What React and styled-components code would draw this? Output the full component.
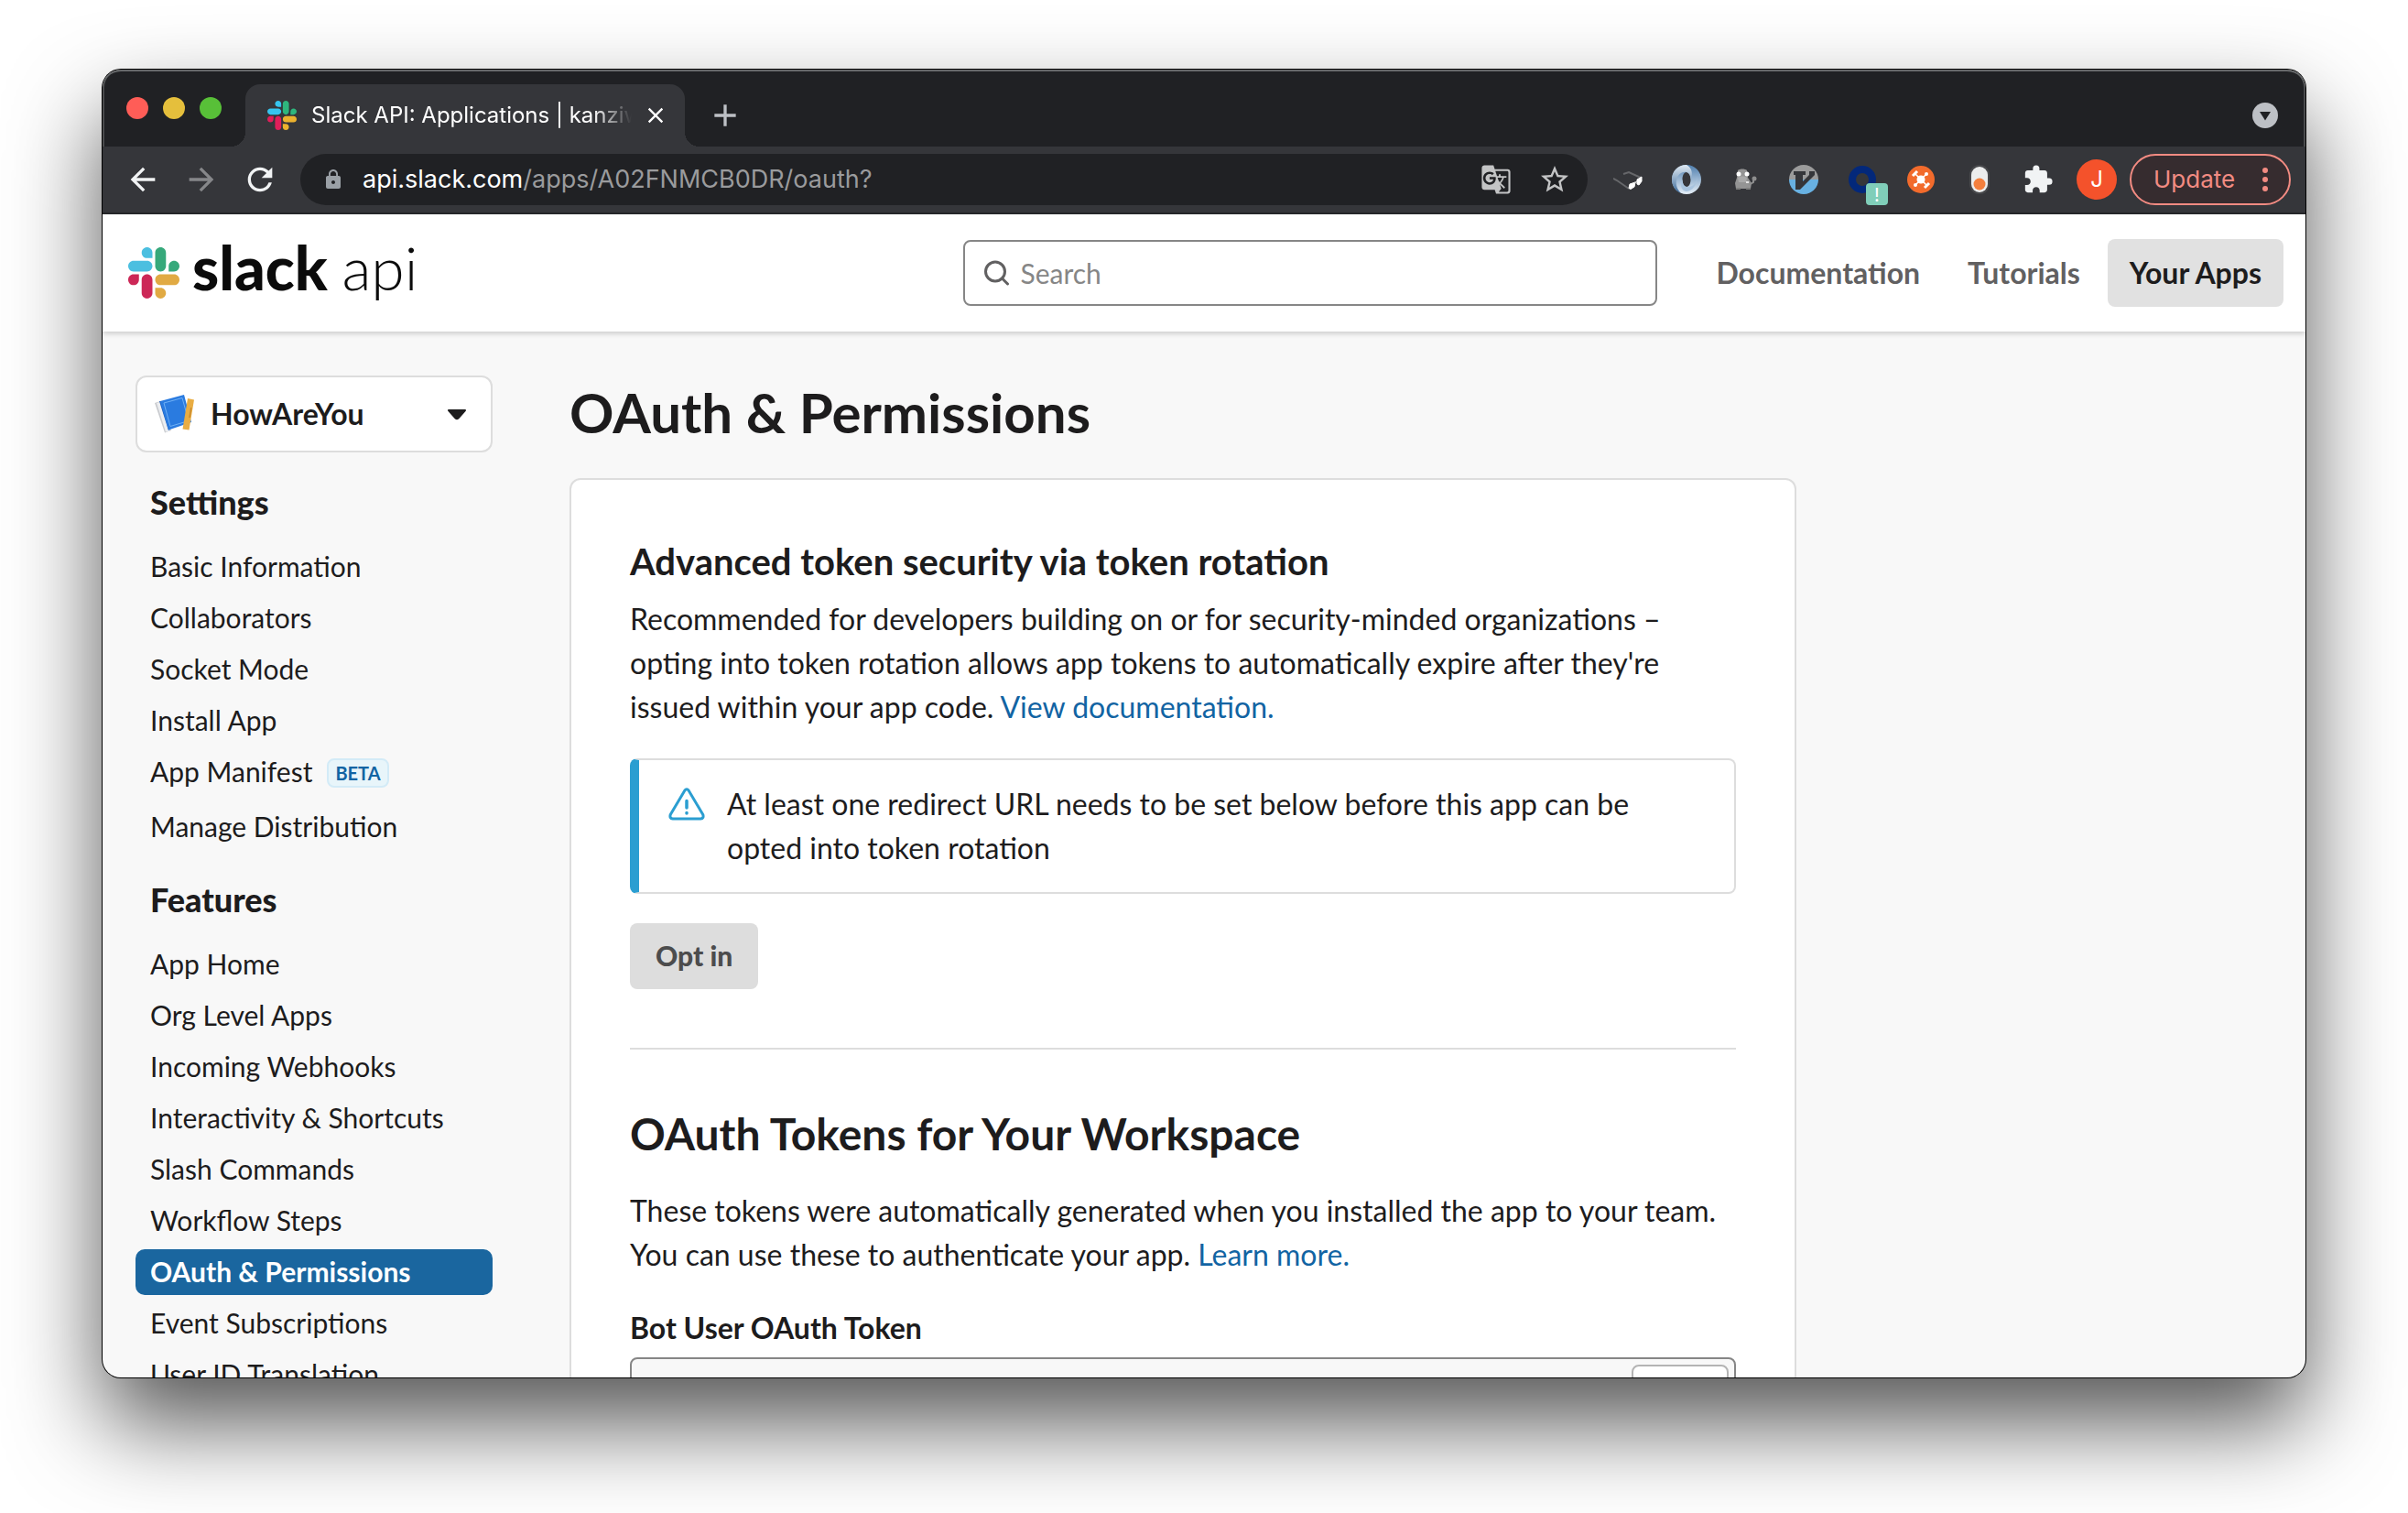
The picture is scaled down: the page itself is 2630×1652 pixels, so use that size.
import React from "react";
import styled, { createGlobalStyle, css } from "styled-components";
import {
  MdAdd,
  MdArrowBack,
  MdArrowForward,
  MdClose,
  MdExtension,
  MdGTranslate,
  MdLock,
  MdRefresh,
  MdStarBorder,
} from "react-icons/md";

const GlobalStyle = createGlobalStyle`
  *, *::before, *::after { box-sizing: border-box; }
  body {
    margin: 0;
    background: #fff;
    color: #1d1c1d;
    font-family: Lato, "Open Sans", sans-serif;
    -webkit-font-smoothing: antialiased;
  }
  button, input, select { font: inherit; color: inherit; }
  h1, h2, h3, p, ul { margin: 0; padding: 0; }
`;

const chromeFont = css`
  font-family: Inter, Roboto, sans-serif;
`;

const Desktop = styled.div`
  display: flex;
  height: 100vh;
  padding: 76px 112px 148px;
  overflow: hidden;
`;

const Window = styled.div`
  flex: 1;
  min-width: 0;
  display: flex;
  flex-direction: column;
  overflow: hidden;
  border-radius: 20px;
  background: #f8f8f8;
  box-shadow: 0 0 0 1px #000, 0 50px 100px rgba(0, 0, 0, 0.67);
`;

/* ---------- browser chrome ---------- */

const TabStrip = styled.div`
  ${chromeFont}
  display: flex;
  align-items: flex-end;
  flex: none;
  height: 84px;
  padding: 0 30px 0 26px;
  background: #202124;
  border-radius: 20px 20px 0 0;
  box-shadow: inset 0 2px 0 #66686a, inset 2px 0 0 #4a4b4d, inset -2px 0 0 #4a4b4d;
`;

const Lights = styled.div`
  display: flex;
  align-items: center;
  align-self: stretch;
  gap: 16px;
  margin-right: 26px;
`;

const Light = styled.button`
  width: 24px;
  height: 24px;
  padding: 0;
  border: 0;
  border-radius: 50%;
  background: ${(p) => p.$color};
`;

const Tab = styled.div`
  position: relative;
  display: flex;
  align-items: center;
  width: 480px;
  height: 68px;
  padding: 0 18px 0 24px;
  border-radius: 16px 16px 0 0;
  background: #35363a;
  color: #fff;

  &::before,
  &::after {
    content: "";
    position: absolute;
    bottom: 0;
    width: 16px;
    height: 16px;
  }
  &::before {
    right: 100%;
    background: radial-gradient(circle at 0 0, transparent 16px, #35363a 16px);
  }
  &::after {
    left: 100%;
    background: radial-gradient(circle at 100% 0, transparent 16px, #35363a 16px);
  }
`;

const TabTitle = styled.span`
  flex: 1;
  min-width: 0;
  margin: 0 12px 0 16px;
  overflow: hidden;
  white-space: nowrap;
  font-size: 24px;
  line-height: 32px;
  mask-image: linear-gradient(to right, #000 88%, transparent);
`;

const BareButton = styled.button`
  display: flex;
  align-items: center;
  justify-content: center;
  flex: none;
  width: ${(p) => p.$width}px;
  height: ${(p) => p.$height || 56}px;
  padding: 0;
  border: 0;
  background: none;
  color: ${(p) => p.$color || "#f1f3f4"};
`;

const NewTab = styled(BareButton)`
  margin-left: 24px;
`;

const TabSearch = styled(BareButton)`
  margin-left: auto;
`;

const Toolbar = styled.div`
  ${chromeFont}
  display: flex;
  align-items: center;
  flex: none;
  height: 74px;
  padding: 0 16px 0 12px;
  background: #35363a;
  border-bottom: 2px solid #27282b;
`;

const Omnibox = styled.div`
  flex: 1;
  min-width: 0;
  display: flex;
  align-items: center;
  height: 56px;
  margin: 0 12px;
  padding: 0 4px 0 24px;
  border-radius: 28px;
  background: #202124;
`;

const Url = styled.span`
  flex: 1;
  min-width: 0;
  margin-left: 20px;
  overflow: hidden;
  white-space: nowrap;
  font-size: 27px;
  line-height: 36px;
  color: #9a9b9d;
`;

const Host = styled.span`
  color: #fff;
`;

const Extension = styled(BareButton)`
  position: relative;
`;

const ExtensionBadge = styled.span`
  position: absolute;
  right: 4px;
  bottom: 0;
  width: 24px;
  height: 24px;
  border-radius: 4px;
  background: #80ceb9;
  color: #fff;
  font-size: 20px;
  line-height: 26px;
  text-align: center;
`;

const Avatar = styled.span`
  width: 44px;
  height: 44px;
  border-radius: 50%;
  background: #f4522b;
  color: #fff;
  font-size: 24px;
  line-height: 44px;
`;

const UpdateButton = styled.button`
  display: flex;
  align-items: center;
  justify-content: space-between;
  width: 176px;
  height: 56px;
  margin-left: 4px;
  padding: 0 22px 0 24px;
  border: 2px solid #f28b82;
  border-radius: 28px;
  background: #362c2f;
  color: #f28b82;
  font-size: 26px;
  line-height: 32px;
`;

/* ---------- site header ---------- */

const SiteHeader = styled.header`
  position: relative;
  display: flex;
  align-items: center;
  flex: none;
  height: 128px;
  padding: 0 24px 0 28px;
  background: #fff;
  box-shadow: 0 2px 6px rgba(0, 0, 0, 0.2);
`;

const Brand = styled.a`
  display: flex;
  align-items: center;
  flex: 1;
  color: #0b0b0b;
  text-decoration: none;
`;

const Wordmark = styled.span`
  margin-left: 14px;
  padding-bottom: 12px;
  font-size: 66px;
  line-height: 72px;
  font-weight: 900;
  white-space: nowrap;
`;

const WordmarkThin = styled.span`
  font-weight: 300;
`;

const SearchField = styled.label`
  display: flex;
  align-items: center;
  gap: 10px;
  width: 758px;
  height: 72px;
  padding: 0 20px;
  border: 2px solid #868686;
  border-radius: 8px;
  color: #616061;
`;

const SearchInput = styled.input`
  flex: 1;
  min-width: 0;
  padding: 0;
  border: 0;
  outline: 0;
  background: none;
  font-size: 30px;
  line-height: 48px;

  &::placeholder {
    color: #868686;
    opacity: 1;
  }
`;

const SiteNav = styled.nav`
  display: flex;
  align-items: center;
  margin-left: 38px;
`;

const NavLink = styled.a`
  margin-left: ${(p) => (p.$active ? 4 : 0)}px;
  padding: 14px ${(p) => (p.$active ? 24 : 26)}px;
  border-radius: 8px;
  background: ${(p) => (p.$active ? "#e1e1e1" : "none")};
  color: ${(p) => (p.$active ? "#1d1c1d" : "#616061")};
  font-size: 32px;
  line-height: 46px;
  font-weight: 700;
  text-decoration: none;
  white-space: nowrap;
`;

/* ---------- page ---------- */

const Page = styled.div`
  flex: 1;
  min-height: 0;
  display: flex;
  align-items: flex-start;
  gap: 84px;
  padding: 48px 36px 0;
  overflow: hidden;
`;

const Sidebar = styled.aside`
  flex: none;
  width: 390px;
`;

const AppPicker = styled.label`
  display: flex;
  align-items: center;
  height: 84px;
  padding: 0 26px 0 18px;
  border: 2px solid #ddd;
  border-radius: 12px;
  background: #fff;
`;

const AppSelect = styled.select`
  flex: 1;
  min-width: 0;
  margin-left: 16px;
  padding: 0;
  border: 0;
  background: none;
  appearance: none;
  font-size: 32px;
  line-height: 48px;
  font-weight: 700;
`;

const SectionTitle = styled.h3`
  margin: 30px 0 22px;
  padding-left: 16px;
  font-size: 36px;
  line-height: 48px;
  font-weight: 900;
`;

const MenuList = styled.ul`
  display: flex;
  flex-direction: column;
  gap: 6px;
  list-style: none;
`;

const MenuLink = styled.a`
  display: flex;
  align-items: flex-start;
  padding: 0 16px 2px;
  border-radius: 10px;
  background: ${(p) => (p.$active ? "#1a669f" : "none")};
  color: ${(p) => (p.$active ? "#fff" : "#1d1c1d")};
  font-size: 30px;
  line-height: 48px;
  font-weight: ${(p) => (p.$active ? 700 : 400)};
  text-decoration: none;
  white-space: nowrap;
`;

const Badge = styled.span`
  height: 32px;
  margin: 10px 0 10px 16px;
  padding: 0 7px;
  border: 2px solid #d3ebf7;
  border-radius: 8px;
  background: #e8f5fa;
  color: #1264a3;
  font-size: 20px;
  line-height: 28px;
  font-weight: 700;
`;

const Main = styled.main`
  flex: 1;
  max-width: 1340px;
`;

const Title = styled.h1`
  margin-bottom: 32px;
  font-size: 60px;
  line-height: 80px;
  font-weight: 700;
  white-space: nowrap;
`;

const Card = styled.section`
  padding: 60px 64px;
  border: 2px solid #ddd;
  border-radius: 12px;
  background: #fff;
`;

const Subheading = styled.h2`
  margin-bottom: 10px;
  font-size: 40px;
  line-height: 58px;
  font-weight: 700;
`;

const Heading = styled.h2`
  margin-bottom: 28px;
  font-size: 48px;
  line-height: 64px;
  font-weight: 700;
`;

const Text = styled.p`
  margin-bottom: 32px;
  font-size: 32px;
  line-height: 48px;
`;

const TextLink = styled.a`
  color: #1264a3;
  text-decoration: none;
`;

const Notice = styled.div`
  display: flex;
  align-items: flex-start;
  gap: 24px;
  margin-bottom: 32px;
  padding: 24px 32px;
  border: 2px solid #ddd;
  border-left: 10px solid #2b9ed1;
  border-radius: 8px;
`;

const NoticeIcon = styled.svg`
  flex: none;
  width: 40px;
  height: 48px;
`;

const NoticeText = styled.p`
  font-size: 32px;
  line-height: 48px;
`;

const OptInButton = styled.button`
  height: 72px;
  padding: 0 28px 2px;
  border: 0;
  border-radius: 8px;
  background: #ddd;
  color: #4c4c4d;
  font-size: 30px;
  line-height: 48px;
  font-weight: 900;
`;

const Divider = styled.hr`
  height: 2px;
  margin: 64px 0 60px;
  border: 0;
  background: #ddd;
`;

const FieldLabel = styled.label`
  display: block;
  margin-bottom: 8px;
  font-size: 32px;
  line-height: 48px;
  font-weight: 700;
`;

const TokenField = styled.div`
  display: flex;
  height: 72px;
  padding: 6px;
  border: 2px solid #868686;
  border-radius: 8px;
  background: #f8f8f8;
`;

const TokenInput = styled.input`
  flex: 1;
  min-width: 0;
  border: 0;
  outline: 0;
  background: none;
`;

const CopyButton = styled.button`
  width: 106px;
  border: 2px solid #b4b4b4;
  border-radius: 8px;
  background: #fff;
`;

/* ---------- drawings ---------- */

const SlackMark = ({ size, colors }) => (
  <svg width={size} height={size} viewBox="0 0 122.8 122.8" aria-hidden="true">
    <path fill={colors[0]} d="M25.8 77.6c0 7.1-5.8 12.9-12.9 12.9S0 84.7 0 77.6s5.8-12.9 12.9-12.9h12.9v12.9zm6.5 0c0-7.1 5.8-12.9 12.9-12.9s12.9 5.8 12.9 12.9v32.3c0 7.1-5.8 12.9-12.9 12.9s-12.9-5.8-12.9-12.9V77.6z" />
    <path fill={colors[1]} d="M45.2 25.8c-7.1 0-12.9-5.8-12.9-12.9S38.1 0 45.2 0s12.9 5.8 12.9 12.9v12.9H45.2zm0 6.5c7.1 0 12.9 5.8 12.9 12.9s-5.8 12.9-12.9 12.9H12.9C5.8 58.1 0 52.3 0 45.2s5.8-12.9 12.9-12.9h32.3z" />
    <path fill={colors[2]} d="M97 45.2c0-7.1 5.8-12.9 12.9-12.9s12.9 5.8 12.9 12.9-5.8 12.9-12.9 12.9H97V45.2zm-6.5 0c0 7.1-5.8 12.9-12.9 12.9s-12.9-5.8-12.9-12.9V12.9C64.7 5.8 70.5 0 77.6 0s12.9 5.8 12.9 12.9v32.3z" />
    <path fill={colors[3]} d="M77.6 97c7.1 0 12.9 5.8 12.9 12.9s-5.8 12.9-12.9 12.9-12.9-5.8-12.9-12.9V97h12.9zm0-6.5c-7.1 0-12.9-5.8-12.9-12.9s5.8-12.9 12.9-12.9h32.3c7.1 0 12.9 5.8 12.9 12.9s-5.8 12.9-12.9 12.9H77.6z" />
  </svg>
);

const GlassesIcon = () => (
  <svg width="32" height="32" viewBox="0 0 32 32" fill="none" aria-hidden="true">
    <path d="M0 15l4 2 13 9M11 10l6-2 13 6" stroke="#66676a" strokeWidth="2" />
    <path d="M18 21l6-2-1 5-4 2.500-2-1zM26 16l5-3v5l-3 4-2-1z" fill="#fff" stroke="#fff" />
    <path d="M23 20l3-2" stroke="#ddd" strokeWidth="1.500" />
  </svg>
);

const SwirlIcon = () => (
  <svg width="32" height="32" viewBox="0 0 32 32" aria-hidden="true">
    <defs>
      <linearGradient id="swirlA" x1="0" y1="0" x2="0" y2="1">
        <stop offset="0" stopColor="#dfe9f2" />
        <stop offset="1" stopColor="#3f6d9c" />
      </linearGradient>
      <linearGradient id="swirlB" x1="0" y1="0" x2="0" y2="1">
        <stop offset="0" stopColor="#4f7fae" />
        <stop offset="1" stopColor="#e6eff7" />
      </linearGradient>
    </defs>
    <path fillRule="evenodd" fill="url(#swirlB)" d="M16 0a16 16 0 100 32 16 16 0 000-32zm0 8c3 0 4.500 4 4.500 8s-1.500 8-4.500 8-4.500-4-4.500-8 1.500-8 4.500-8z" />
    <path fill="url(#swirlA)" d="M16 0C6 0 0 7 0 16c0 7 4 13 10 15-4-4-6-9-5-14C6 10 12 7 16 8c3 1 4.500 4 4.500 8 3-7 1-13-4.500-16z" />
    <path fill="#a9c4de" d="M27 9c2 8-2 16-11 15-3-1-4.500-4-4.500-8-3 7-1 12 4 13 8 0 14-10 11.500-20z" />
  </svg>
);

const CritterIcon = () => (
  <svg width="32" height="32" viewBox="0 0 32 32" aria-hidden="true">
    <path fill="#949494" d="M8 6c2-2 8-2 10 0l1 8 4 6-1 6H6l-1-6 2-6z" />
    <path fill="#7c7c7c" d="M6 25h5v2H6zm11 0h5v2h-5z" />
    <path d="M20 22l5-3v-5" fill="none" stroke="#8e8e8e" strokeWidth="2" />
    <circle cx="26" cy="15" r="2.500" fill="#8e8e8e" />
    <path fill="#a9a9a9" d="M8 14c3-2 7-2 10 0l-1 5H9z" />
    <circle cx="9" cy="10" r="2.500" fill="#fff" />
    <circle cx="18" cy="10" r="2.500" fill="#fff" />
    <path fill="#e4e4e4" d="M17 18h3v2h-3z" />
  </svg>
);

const VimIcon = () => (
  <svg width="32" height="32" viewBox="0 0 32 32" aria-hidden="true">
    <path fill="#9b9b9b" d="M0 16a16 16 0 0132 0z" />
    <path fill="#68b1e2" d="M0 16a16 16 0 0032 0z" />
    <path fill="#35363a" d="M5 7h13v4h-3v7l7-7V7h6v4L12 27H7V11H5z" />
  </svg>
);

const RingIcon = () => (
  <svg width="30" height="30" viewBox="0 0 30 30" fill="none" aria-hidden="true">
    <circle cx="15" cy="15" r="11" stroke="#03287a" strokeWidth="8" />
  </svg>
);

const DroneIcon = () => (
  <svg width="30" height="30" viewBox="0 0 30 30" aria-hidden="true">
    <circle cx="15" cy="15" r="15" fill="#f26b2c" />
    <circle cx="15" cy="15" r="4.500" fill="#fff" />
    <path d="M9 9l12 12M21 9L9 21" stroke="#fff" strokeWidth="1.500" />
    <path d="M6 11l5-5M19 24l5-5" stroke="#fff" strokeWidth="3" />
    <circle cx="21" cy="9" r="2" fill="#fff" />
    <circle cx="9" cy="21" r="2" fill="#fff" />
  </svg>
);

const ToggleIcon = () => (
  <svg width="22" height="32" viewBox="0 0 22 32" aria-hidden="true">
    <rect width="22" height="32" rx="11" fill="#47484b" />
    <rect x="2" y="2" width="18" height="28" rx="9" fill="#eceded" />
    <circle cx="11" cy="21" r="6.500" fill="#f37f3d" />
  </svg>
);

const DotsIcon = () => (
  <svg width="8" height="28" viewBox="0 0 8 28" fill="currentColor" aria-hidden="true">
    <circle cx="4" cy="4" r="3" />
    <circle cx="4" cy="14" r="3" />
    <circle cx="4" cy="24" r="3" />
  </svg>
);

const TabSearchIcon = () => (
  <svg width="28" height="28" viewBox="0 0 28 28" aria-hidden="true">
    <circle cx="14" cy="14" r="14" fill="#bdc0c5" />
    <path fill="#202124" d="M8 10h12l-6 9.500z" />
  </svg>
);

const SearchIcon = () => (
  <svg width="30" height="28" viewBox="0 0 30 28" fill="none" stroke="currentColor" strokeWidth="3" strokeLinecap="round" aria-hidden="true">
    <circle cx="13" cy="12.500" r="10.500" />
    <path d="M20.500 20l6 6" />
  </svg>
);

const NotebookIcon = () => (
  <svg width="46" height="46" viewBox="0 0 46 46" aria-hidden="true">
    <path fill="#c9cbcf" d="M1 11l6-2 12 32-7 2.500z" />
    <path fill="#eceef1" d="M3 11l4-1 10 32-4 .5z" />
    <path fill="#1c5fbf" d="M6 9l4 0 8 30-2 2z" />
    <path fill="#2a7be0" d="M7 9L33 2l8 30-25 8.500z" />
    <path fill="none" stroke="#6fb0f5" strokeWidth="1" d="M11 11l20-5.500 7 25-20 6z" />
    <path fill="#e9ad43" d="M37 6l7 1.500-5.500 33-7-1z" />
    <path fill="#c98a2e" d="M40 16l1.500.3-1.800 11-1.500-.3z" />
  </svg>
);

const CaretIcon = () => (
  <svg width="22" height="14" viewBox="0 0 22 14" aria-hidden="true">
    <path fill="#1d1c1d" stroke="#1d1c1d" strokeWidth="2" strokeLinejoin="round" d="M2 3h18l-7.500 8.500q-1.500 1.500-3 0z" />
  </svg>
);

/* ---------- data ---------- */

const faviconColors = ["#e01e5a", "#36c5f0", "#2eb67d", "#ecb22e"];
const brandColors = ["#cc2857", "#4bbfe0", "#36a97b", "#e1aa43"];

const extensions = [
  { label: "Reader", icon: <GlassesIcon /> },
  { label: "JSON viewer", icon: <SwirlIcon /> },
  { label: "Critter", icon: <CritterIcon /> },
  { label: "Vim keys", icon: <VimIcon /> },
  { label: "Ring", icon: <RingIcon />, badge: "!" },
  { label: "Drone", icon: <DroneIcon /> },
  { label: "Toggle", icon: <ToggleIcon /> },
  { label: "Extensions", icon: <MdExtension size={34} /> },
];

const menu = [
  {
    title: "Settings",
    items: [
      { label: "Basic Information" },
      { label: "Collaborators" },
      { label: "Socket Mode" },
      { label: "Install App" },
      { label: "App Manifest", badge: "BETA" },
      { label: "Manage Distribution" },
    ],
  },
  {
    title: "Features",
    items: [
      { label: "App Home" },
      { label: "Org Level Apps" },
      { label: "Incoming Webhooks" },
      { label: "Interactivity & Shortcuts" },
      { label: "Slash Commands" },
      { label: "Workflow Steps" },
      { label: "OAuth & Permissions", active: true },
      { label: "Event Subscriptions" },
      { label: "User ID Translation" },
    ],
  },
];

const BrowserChrome = () => (
  <>
    <TabStrip>
      <Lights>
        <Light $color="#ff5d57" aria-label="Close window" />
        <Light $color="#e5bf3c" aria-label="Minimize window" />
        <Light $color="#58c038" aria-label="Zoom window" />
      </Lights>
      <Tab>
        <SlackMark size={32} colors={faviconColors} />
        <TabTitle>Slack API: Applications | kanziw</TabTitle>
        <BareButton $width={28} aria-label="Close tab" $color="#fff">
          <MdClose size={28} />
        </BareButton>
      </Tab>
      <NewTab $width={40} $height={68} $color="#bdc0c5" aria-label="New tab">
        <MdAdd size={40} />
      </NewTab>
      <TabSearch $width={28} $height={68} aria-label="Search tabs">
        <TabSearchIcon />
      </TabSearch>
    </TabStrip>
    <Toolbar>
      <BareButton $width={64} aria-label="Back">
        <MdArrowBack size={40} />
      </BareButton>
      <BareButton $width={64} $color="#86878a" aria-label="Forward">
        <MdArrowForward size={40} />
      </BareButton>
      <BareButton $width={64} aria-label="Reload">
        <MdRefresh size={40} />
      </BareButton>
      <Omnibox>
        <MdLock size={24} color="#9aa0a6" />
        <Url>
          <Host>api.slack.com</Host>/apps/A02FNMCB0DR/oauth?
        </Url>
        <BareButton $width={64} $color="#c3c4c5" aria-label="Translate this page">
          <MdGTranslate size={34} />
        </BareButton>
        <BareButton $width={64} $color="#c3c4c5" aria-label="Bookmark this page">
          <MdStarBorder size={36} />
        </BareButton>
      </Omnibox>
      {extensions.map((ext) => (
        <Extension key={ext.label} $width={64} aria-label={ext.label}>
          {ext.icon}
          {ext.badge && <ExtensionBadge>{ext.badge}</ExtensionBadge>}
        </Extension>
      ))}
      <BareButton $width={64} aria-label="Profile">
        <Avatar>J</Avatar>
      </BareButton>
      <UpdateButton>
        Update
        <DotsIcon />
      </UpdateButton>
    </Toolbar>
  </>
);

export default function App() {
  return (
    <Desktop>
      <GlobalStyle />
      <Window>
        <BrowserChrome />
        <SiteHeader>
          <Brand href="#">
            <SlackMark size={56} colors={brandColors} />
            <Wordmark>
              slack <WordmarkThin>api</WordmarkThin>
            </Wordmark>
          </Brand>
          <SearchField>
            <SearchIcon />
            <SearchInput type="text" placeholder="Search" aria-label="Search" />
          </SearchField>
          <SiteNav>
            <NavLink href="#">Documentation</NavLink>
            <NavLink href="#">Tutorials</NavLink>
            <NavLink href="#" $active>
              Your Apps
            </NavLink>
          </SiteNav>
        </SiteHeader>
        <Page>
          <Sidebar>
            <AppPicker>
              <NotebookIcon />
              <AppSelect aria-label="App" defaultValue="HowAreYou">
                <option>HowAreYou</option>
              </AppSelect>
              <CaretIcon />
            </AppPicker>
            {menu.map((section) => (
              <nav key={section.title} aria-label={section.title}>
                <SectionTitle>{section.title}</SectionTitle>
                <MenuList>
                  {section.items.map((item) => (
                    <li key={item.label}>
                      <MenuLink href="#" $active={item.active}>
                        {item.label}
                        {item.badge && <Badge>{item.badge}</Badge>}
                      </MenuLink>
                    </li>
                  ))}
                </MenuList>
              </nav>
            ))}
          </Sidebar>
          <Main>
            <Title>OAuth &amp; Permissions</Title>
            <Card>
              <Subheading>Advanced token security via token rotation</Subheading>
              <Text>
                Recommended for developers building on or for security-minded organizations –
                opting into token rotation allows app tokens to automatically expire after
                they're issued within your app code.{" "}
                <TextLink href="#">View documentation.</TextLink>
              </Text>
              <Notice>
                <NoticeIcon viewBox="0 0 40 48" fill="none" stroke="#2b9ed1" strokeLinecap="round" aria-hidden="true">
                  <path strokeWidth="3" strokeLinejoin="round" d="M17.800 9.200q2.200-3 4.400 0L37.800 35.500q1.200 4-2.600 4.500H4.800q-3.800-.5-2.600-4.500z" />
                  <path strokeWidth="3.500" d="M20 20.500v7.500M20 33.500v.5" />
                </NoticeIcon>
                <NoticeText>
                  At least one redirect URL needs to be set below before this app can be opted
                  into token rotation
                </NoticeText>
              </Notice>
              <OptInButton>Opt in</OptInButton>
              <Divider />
              <Heading>OAuth Tokens for Your Workspace</Heading>
              <Text>
                These tokens were automatically generated when you installed the app to your
                team. You can use these to authenticate your app.{" "}
                <TextLink href="#">Learn more.</TextLink>
              </Text>
              <FieldLabel htmlFor="bot-token">Bot User OAuth Token</FieldLabel>
              <TokenField>
                <TokenInput id="bot-token" type="text" readOnly />
                <CopyButton aria-label="Copy" />
              </TokenField>
            </Card>
          </Main>
        </Page>
      </Window>
    </Desktop>
  );
}
